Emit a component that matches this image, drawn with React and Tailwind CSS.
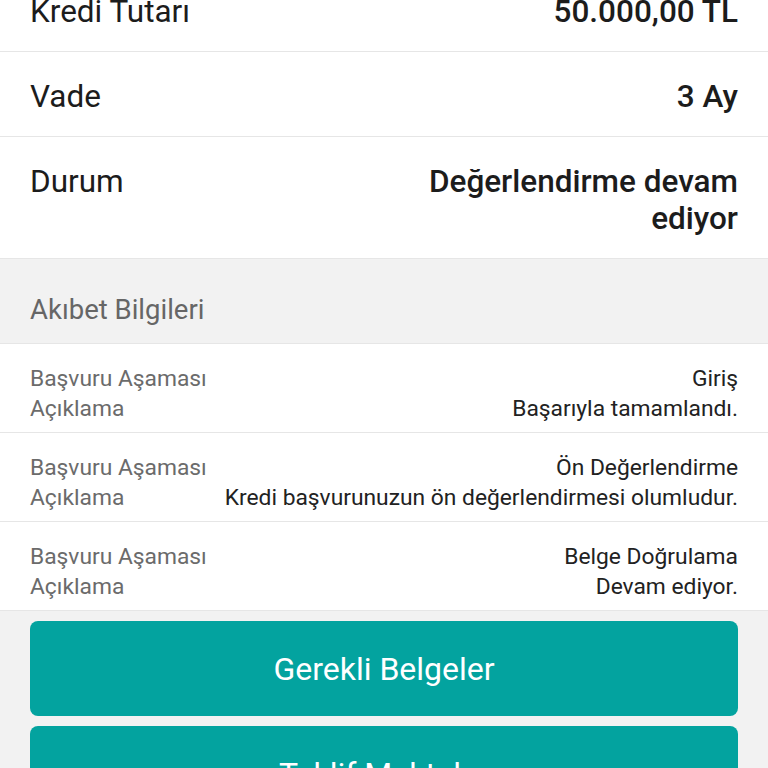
import React from "react";

const summary = [
  { label: "Kredi Tutarı", value: "50.000,00 TL" },
  { label: "Vade", value: "3 Ay" },
  { label: "Durum", value: "Değerlendirme devam ediyor" },
];

const stages = [
  { stage: "Giriş", note: "Başarıyla tamamlandı." },
  { stage: "Ön Değerlendirme", note: "Kredi başvurunuzun ön değerlendirmesi olumludur." },
  { stage: "Belge Doğrulama", note: "Devam ediyor." },
];

function SummaryRow({ label, value }) {
  return (
    <div className="flex items-start justify-between gap-6 border-b border-[#e6e6e6] bg-white px-[30px] pt-[26px] pb-[21px] text-[31.5px] leading-[37px] text-[#1c1c1c]">
      <span>{label}</span>
      <span className="max-w-[50%] text-right font-medium">{value}</span>
    </div>
  );
}

function StageRow({ stage, note }) {
  return (
    <div className="border-b border-[#e6e6e6] bg-white px-[30px] pt-[20px] pb-[8px] text-[22.8px] leading-[30px]">
      <div className="flex justify-between gap-4">
        <span className="text-[#6b6b6b]">Başvuru Aşaması</span>
        <span className="text-right text-[#222]">{stage}</span>
      </div>
      <div className="flex justify-between gap-4">
        <span className="shrink-0 text-[#6b6b6b]">Açıklama</span>
        <span className="text-right text-[#222]">{note}</span>
      </div>
    </div>
  );
}

export default function App() {
  return (
    <div
      className="h-[768px] overflow-hidden bg-[#f2f2f2]"
      style={{ fontFamily: "Roboto, 'Noto Sans', sans-serif" }}
    >
      <div className="-mt-[33px]">
        {summary.map((row) => (
          <SummaryRow key={row.label} {...row} />
        ))}

        <div className="border-b border-[#e6e6e6] bg-[#f2f2f2] px-[30px] pt-[35px] pb-[17px] text-[27.5px] leading-[32px] text-[#666]">
          Akıbet Bilgileri
        </div>

        {stages.map((row) => (
          <StageRow key={row.stage} {...row} />
        ))}

        <div className="flex flex-col gap-[10px] px-[30px] pt-[10px]">
          <button className="flex h-[95px] w-full items-center justify-center rounded-[8px] bg-[#03a39f] text-[32px] text-white">
            Gerekli Belgeler
          </button>
          <button className="flex h-[95px] w-full items-center justify-center rounded-[8px] bg-[#03a39f] text-[32px] text-white">
            Teklif Mektubu
          </button>
        </div>
      </div>
    </div>
  );
}
